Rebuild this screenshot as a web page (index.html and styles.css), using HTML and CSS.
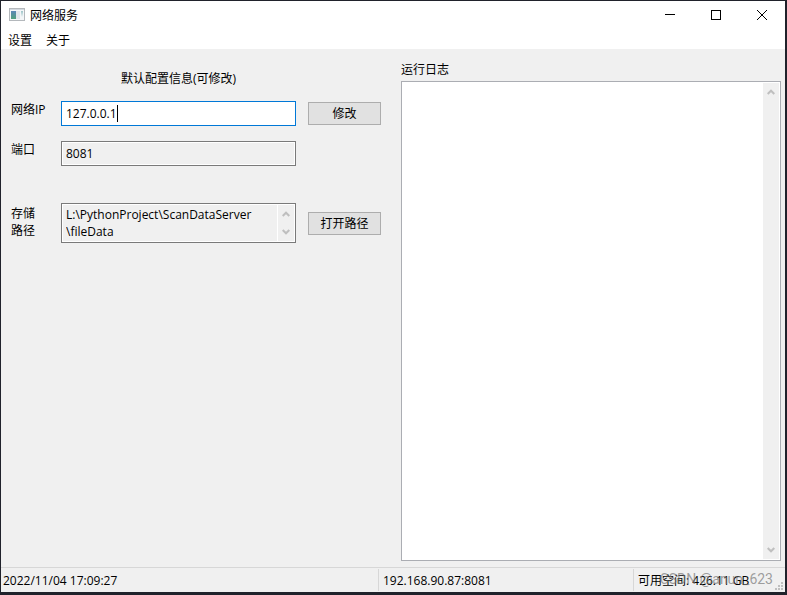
FILE: index.html
```html
<!DOCTYPE html>
<html lang="zh-CN">
<head>
    <meta charset="UTF-8">
    <meta name="viewport" content="width=device-width, initial-scale=1.0">
    <title>网络服务</title>
    <link rel="stylesheet" href="styles.css">
</head>
<body>
    <div class="window">
        <header class="titlebar">
            <svg class="app-icon" width="16" height="14" viewBox="0 0 16 14">
                <defs>
                    <linearGradient id="pane" x1="0" y1="0" x2="0" y2="1">
                        <stop offset="0" stop-color="#5b86b8"/>
                        <stop offset="1" stop-color="#4fa07c"/>
                    </linearGradient>
                    <linearGradient id="side" x1="0" y1="0" x2="0" y2="1">
                        <stop offset="0" stop-color="#9cc4c8"/>
                        <stop offset="1" stop-color="#f4f6f8"/>
                    </linearGradient>
                </defs>
                <rect x="0.5" y="0.5" width="15" height="12" fill="#f4f6f8" stroke="#b4b8bc"/>
                <rect x="1" y="1" width="14" height="1" fill="#d3d9e0"/>
                <rect x="2" y="3" width="5" height="8" fill="url(#pane)"/>
                <rect x="7" y="3" width="4" height="8" fill="#dfe5ea"/>
                <rect x="12" y="3" width="2" height="6" fill="url(#side)"/>
            </svg>
            <h1 class="title">网络服务</h1>
            <div class="window-buttons">
                <button class="window-button" type="button" aria-label="最小化">
                    <svg width="10" height="10" viewBox="0 0 10 10" shape-rendering="crispEdges"><path d="M0 4.5h10" stroke="#000"/></svg>
                </button>
                <button class="window-button" type="button" aria-label="最大化">
                    <svg width="10" height="10" viewBox="0 0 10 10" shape-rendering="crispEdges"><rect x="0.5" y="0.5" width="9" height="9" fill="none" stroke="#000"/></svg>
                </button>
                <button class="window-button" type="button" aria-label="关闭">
                    <svg width="10" height="10" viewBox="0 0 10 10"><path d="M0 0l10 10M10 0L0 10" stroke="#000"/></svg>
                </button>
            </div>
        </header>

        <nav class="menubar">
            <button class="menu-item" type="button">设置</button>
            <button class="menu-item" type="button">关于</button>
        </nav>

        <main class="content">
            <form class="settings">
                <h2 class="settings-title">默认配置信息(可修改)</h2>

                <div class="row">
                    <label class="label" for="ip">网络IP</label>
                    <div class="field field-active">
                        <input class="input" id="ip" type="text" value="127.0.0.1">
                        <span class="caret"></span>
                    </div>
                    <button class="button" type="button">修改</button>
                </div>

                <div class="row">
                    <label class="label" for="port">端口</label>
                    <div class="field">
                        <input class="input" id="port" type="text" value="8081" readonly>
                    </div>
                </div>

                <div class="row row-path">
                    <label class="label" for="path">存储<br>路径</label>
                    <div class="field">
                        <textarea class="path" id="path" rows="2" readonly>L:\PythonProject\ScanDataServer
\fileData</textarea>
                        <div class="scrollbar">
                            <svg width="8" height="6" viewBox="0 0 8 6"><path d="M0.7 5L4 1.7 7.3 5" fill="none" stroke="#bfbfbf" stroke-width="2"/></svg>
                            <svg width="8" height="6" viewBox="0 0 8 6"><path d="M0.7 1L4 4.3 7.3 1" fill="none" stroke="#bfbfbf" stroke-width="2"/></svg>
                        </div>
                    </div>
                    <button class="button" type="button">打开路径</button>
                </div>
            </form>

            <section class="log">
                <label class="log-title" for="log">运行日志</label>
                <div class="log-box">
                    <textarea class="log-text" id="log" readonly></textarea>
                    <div class="scrollbar">
                        <svg width="8" height="6" viewBox="0 0 8 6"><path d="M0.7 5L4 1.7 7.3 5" fill="none" stroke="#bfbfbf" stroke-width="2"/></svg>
                        <svg width="8" height="6" viewBox="0 0 8 6"><path d="M0.7 1L4 4.3 7.3 1" fill="none" stroke="#bfbfbf" stroke-width="2"/></svg>
                    </div>
                </div>
            </section>
        </main>

        <footer class="statusbar">
            <span class="status">2022/11/04 17:09:27</span>
            <span class="status">192.168.90.87:8081</span>
            <span class="status">可用空间: 426.11 GB</span>
            <svg class="grip" width="8" height="8" viewBox="0 0 8 8" shape-rendering="crispEdges" fill="#bfbfbf">
                <path d="M6 0h2v2h-2zM3 3h2v2h-2zM6 3h2v2h-2zM0 6h2v2h-2zM3 6h2v2h-2zM6 6h2v2h-2z"/>
            </svg>
            <span class="watermark">CSDN @anun_623</span>
        </footer>
    </div>
</body>
</html>
```

FILE: styles.css
```css
* {
    box-sizing: border-box;
}
body {
    margin: 0;
    color: #000;
    font: 12px/17px "Open Sans", "Noto Sans CJK SC", sans-serif;
}
button, input, textarea {
    font: inherit;
    color: inherit;
}
.window {
    display: flex;
    flex-direction: column;
    height: 100vh;
    border: 1px solid #20222b;
    border-right-width: 2px;
    border-bottom-width: 3px;
    background: #f0f0f0;
}

/* title bar and menu */
.titlebar {
    display: flex;
    align-items: center;
    height: 28px;
    padding-left: 8px;
    background: #fff;
}
.title {
    margin: 0 0 0 5px;
    font-size: 12px;
    font-weight: 400;
}
.window-buttons {
    display: flex;
    align-self: stretch;
    margin-left: auto;
}
.window-button {
    display: flex;
    align-items: center;
    justify-content: center;
    width: 46px;
    padding: 0;
    border: none;
    background: none;
}
.menubar {
    display: flex;
    height: 20px;
    background: #fff;
}
.menu-item {
    padding: 2px 7px 0;
    border: none;
    background: none;
}

/* main area */
.content {
    display: grid;
    grid-template-columns: 370fr 380fr;
    gap: 20px;
    flex: 1;
    min-height: 0;
    padding: 12px 4px 6px 10px;
}
.settings {
    display: flex;
    flex-direction: column;
    gap: 15px;
    padding-top: 11px;
}
.settings-title {
    margin: 0 0 0 110px;
    font-size: 12px;
    font-weight: 400;
    line-height: 14px;
}
.row {
    display: grid;
    grid-template-columns: 38px 1fr 73px;
    column-gap: 12px;
}
.row-path {
    margin-top: 22px;
}
.label {
    white-space: nowrap;
}
.row-path .label {
    padding-top: 2px;
}
.field {
    display: flex;
    min-width: 0;
    min-height: 25px;
    padding: 1px 1px 1px 4px;
    border: 1px solid #7a7a7a;
    background: #f0f0f0;
    box-shadow: inset 0 0 0 1px #fff;
}
.field-active {
    align-items: center;
    border-color: #0078d7;
    background: #fff;
}
.input {
    width: 100%;
    padding: 0 0 1px;
    border: none;
    outline: none;
    background: none;
}
.field-active .input {
    width: auto;
    field-sizing: content;
}
.caret {
    width: 1px;
    height: 17px;
    background: #000;
}
.path {
    flex: 1;
    min-width: 0;
    padding: 1px 0;
    border: none;
    outline: none;
    background: none;
    resize: none;
    white-space: pre;
    overflow: hidden;
}
.button {
    align-self: center;
    height: 23px;
    padding: 0;
    border: 1px solid #adadad;
    background: #e1e1e1;
}

/* scroll bars */
.scrollbar {
    display: flex;
    flex-direction: column;
    align-items: center;
    justify-content: space-between;
    width: 17px;
    padding: 6px 0;
    border-left: 1px solid #fff;
    background: #f0f0f0;
}

/* log */
.log {
    display: flex;
    flex-direction: column;
    gap: 3px;
}
.log-box {
    display: flex;
    flex: 1;
    padding: 1px;
    border: 1px solid #abadb3;
    background: #fff;
}
.log-text {
    flex: 1;
    min-width: 0;
    padding: 3px 4px;
    border: none;
    outline: none;
    background: none;
    resize: none;
    overflow: hidden;
}

/* status bar */
.statusbar {
    position: relative;
    display: grid;
    grid-template-columns: 377fr 255fr 152fr;
    height: 25px;
    border-top: 1px solid #d7d7d7;
}
.status {
    margin: 1px 0;
    padding: 3px 0 0 4px;
    border-left: 1px solid #d7d7d7;
    white-space: nowrap;
}
.status:first-child {
    padding-left: 2px;
    border-left: none;
}
.grip {
    position: absolute;
    right: 2px;
    bottom: 2px;
}
.watermark {
    position: absolute;
    right: 12px;
    top: 3px;
    color: rgba(120, 120, 120, 0.7);
    font-family: Roboto, sans-serif;
    font-size: 14px;
}
```
